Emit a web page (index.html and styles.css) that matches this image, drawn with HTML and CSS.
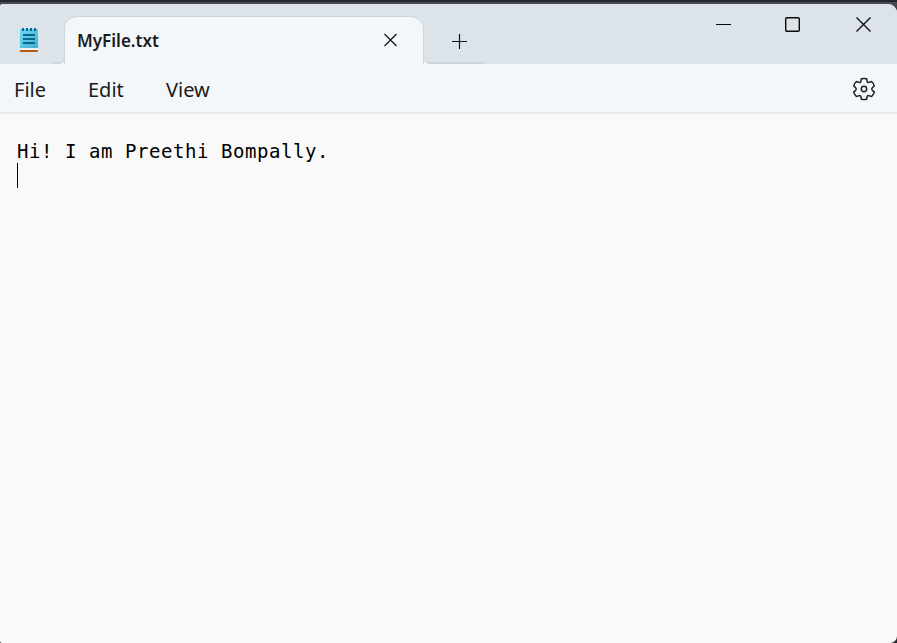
FILE: index.html
```
<!DOCTYPE html>
<html lang="en">
<head>
<meta charset="utf-8">
<title>MyFile.txt</title>
<link rel="stylesheet" href="styles.css">
</head>
<body>
<div class="window">
  <header class="titlebar">
    <svg class="app-icon" width="20" height="26" viewBox="0 0 20 26">
      <defs><linearGradient id="page" x1="0" y1="0" x2="1" y2="1"><stop offset="0" stop-color="#6fd9ee"/><stop offset="1" stop-color="#43afd2"/></linearGradient></defs>
      <path fill="#f1f2f3" d="M1 20h18v2H1z"/>
      <path fill="#b05a16" d="M1 22h18v1l-1 1H1z"/>
      <path fill="url(#page)" d="M1 1h18v19H1z"/>
      <path fill="#08678f" d="M3 0h2v3H3zM7 0h2v3H7zM11 0h2v3h-2zM15 0h2v3h-2zM4 6h12v2H4zM4 10h12v2H4zM4 14h12v2H4z"/>
    </svg>
    <div class="flare"><div class="tab-edge"></div></div>
    <div class="tab">
      <span class="tab-title">MyFile.txt</span>
      <svg class="tab-close" width="14" height="14" viewBox="0 0 14 14"><path d="M.5 1l12 12M12.500 1l-12 12"/></svg>
    </div>
    <div class="flare"><div class="new-tab"><svg width="16" height="16" viewBox="0 0 16 16"><path d="M0 7.5h15M7.5 0v15"/></svg></div></div>
    <div class="controls">
      <svg width="16" height="16" viewBox="0 0 16 16"><path d="M0 8.5h15"/></svg>
      <svg class="maximize" width="16" height="16" viewBox="0 0 16 16"><rect x=".7" y="1.7" width="13.6" height="13.6" rx="1.2"/></svg>
      <svg width="16" height="16" viewBox="0 0 16 16"><path d="M.5 1.5l14 14M14.5 1.5l-14 14"/></svg>
    </div>
  </header>
  <nav class="menu">
    <span class="file">File</span><span class="edit">Edit</span><span class="view">View</span>
    <svg class="gear" width="24" height="24" viewBox="0 0 24 24"><path d="M9.4 1.7Q12 1.1 14.6 1.7L15.1 4.3Q15.5 5.8 17 5.3L19.6 4.5Q21.5 6.3 22.3 8.9L20.3 10.7Q19.1 12 20.3 13.3L22.3 15.1Q21.5 17.7 19.6 19.5L17 18.7Q15.5 18.2 15.1 19.7L14.6 22.3Q12 22.9 9.4 22.3L8.9 19.7Q8.5 18.2 7 18.7L4.4 19.5Q2.5 17.7 1.7 15.1L3.7 13.3Q4.9 12 3.7 10.7L1.7 8.9Q2.5 6.3 4.4 4.5L7 5.3Q8.5 5.8 8.9 4.3Z"/><circle cx="12" cy="12" r="2.7"/></svg>
  </nav>
  <main class="editor">
    <div class="line">Hi! I am Preethi Bompally.</div>
    <div class="caret"></div>
  </main>
</div>
</body>
</html>
```
FILE: styles.css
```
* { box-sizing: border-box; }
html, body { height: 100%; margin: 0; overflow: hidden; }
body {
  background: linear-gradient(#24282e 2px, #48494e 2px, #48494e 6px, #24282e 14px);
  padding-top: 4px;
  font-family: "Noto Sans", "Open Sans", sans-serif;
  color: #1b1b1b;
}
.window {
  height: 639px;
  display: flex;
  flex-direction: column;
  overflow: hidden;
  border-radius: 3px 9px 7px 2px;
  background: #f9f9f9;
}
svg { display: block; fill: none; stroke: #111; stroke-width: 1.2; flex: none; }
.titlebar { height: 60px; flex: none; display: flex; background: #dce4ea; }
.app-icon { margin: 24px 14px 0 19px; stroke: none; }
.flare { background: linear-gradient(#dce4ea 52px, #f3f7fa 52px); }
.tab-edge {
  width: 12px;
  height: 60px;
  background: linear-gradient(#dce4ea, #dce4ea) padding-box, linear-gradient(#dce4ea 24px, #cdd6dc 24px) border-box;
  border: solid transparent;
  border-width: 0 1px 2px 0;
  border-bottom-right-radius: 6px;
}
.tab {
  width: 360px;
  height: 48px;
  margin-top: 12px;
  margin-left: -1px;
  padding: 0 25px 0 12px;
  display: flex;
  align-items: center;
  justify-content: space-between;
  background: #f3f7fa;
  border: solid #cdd6dc;
  border-width: 1px 1px 0;
  border-radius: 13px 13px 0 0;
}
.tab-title { font-size: 17px; font-weight: 600; line-height: 24px; }
.tab-close { margin-bottom: 2px; }
.new-tab {
  width: 61px;
  height: 60px;
  padding: 30px 0 0 28px;
  background: #dce4ea;
  border-bottom: 2px solid #cdd6dc;
  border-bottom-left-radius: 6px;
}
.controls { margin: 12px 25px 0 auto; display: flex; gap: 54px; }
.controls svg { stroke: #080808; stroke-width: 1.3; }
.controls svg:first-child { stroke-width: 1; }
.controls .maximize { margin: 0 1px 0 -1px; stroke-width: 1.4; }
.menu {
  height: 50px;
  flex: none;
  display: flex;
  background: #f3f7fa;
  border-bottom: 2px solid #e8e8e8;
  font-size: 20px;
  line-height: 51px;
  padding-left: 14px;
}
.file { width: 74px; }
.edit { width: 78px; }
.gear { margin: 13px 21px 0 auto; stroke: #202020; stroke-width: 1.5; }
.editor { flex: 1; padding: 25px 17px; color: #000; }
.line { font: 19px/24px "DejaVu Sans Mono", monospace; letter-spacing: .56px; }
.caret { width: 1px; height: 25px; background: #000; }
```
